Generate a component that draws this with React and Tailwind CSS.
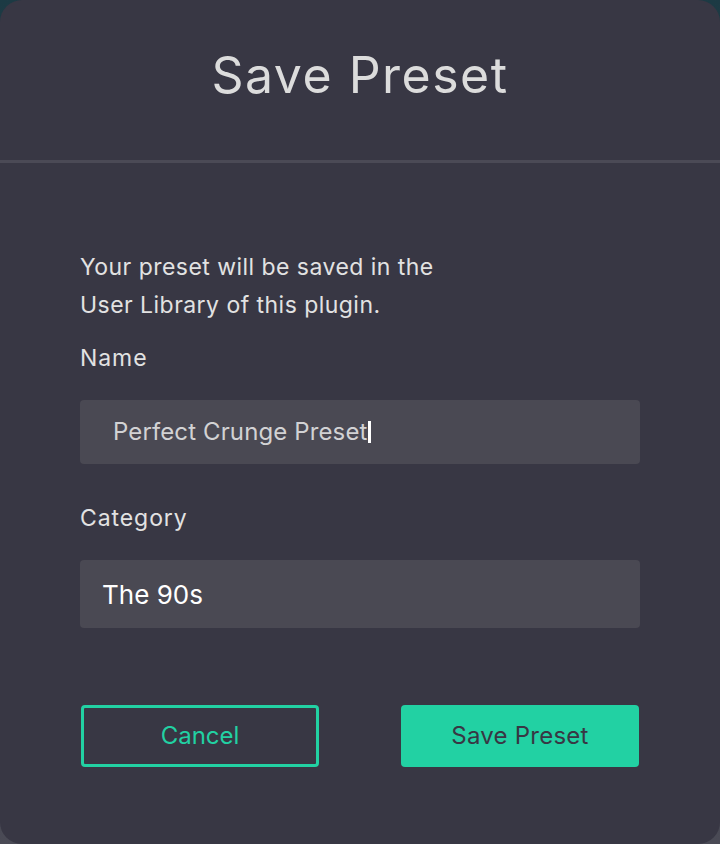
import React from 'react';

const font = { fontFamily: 'Inter, "Open Sans", sans-serif' };

export default function App() {
  return (
    <div className="w-[720px] h-[844px] bg-gradient-to-b from-[#1c3a44] to-[#4a4a55]" style={font}>
      <div className="w-full h-full bg-[#383744] rounded-[22px] flex flex-col">
        {/* Header */}
        <div className="h-[160px] flex items-center justify-center">
          <h1 className="text-[50px] text-[#dcdcdc] font-normal tracking-[0.03em] -mt-[10px]">Save Preset</h1>
        </div>
        <div className="h-[3px] bg-[#4b4a56]" />

        {/* Body */}
        <div className="px-[80px] pt-[85px] flex flex-col">
          <p className="text-[23px] leading-[38px] text-[#e2e2e2] tracking-[0.02em]">
            Your preset will be saved in the
            <br />
            User Library of this plugin.
          </p>
          <label className="mt-[19px] text-[23px] leading-[30px] text-[#e2e2e2] tracking-[0.04em]">Name</label>
          <div className="mt-[27px] h-[64px] bg-[#4a4953] rounded-[4px] flex items-center pl-[33px]">
            <span className="text-[24px] text-[#d2d2d4] tracking-[0.005em]">Perfect Crunge Preset</span>
            <span className="w-[3px] h-[22px] bg-white ml-[1px]" />
          </div>
          <label className="mt-[39px] text-[23px] leading-[30px] text-[#e2e2e2] tracking-[0.04em]">Category</label>
          <div className="mt-[27px] h-[68px] bg-[#4a4953] rounded-[4px] flex items-center pl-[22px]">
            <span className="text-[26px] text-white">The 90s</span>
          </div>

          {/* Actions */}
          <div className="mt-[77px] flex gap-[82px] pl-px">
            <button className="w-[238px] h-[62px] border-[3px] border-[#22d1a3] rounded-[4px] text-[24px] text-[#22d1a3]">
              Cancel
            </button>
            <button className="w-[238px] h-[62px] bg-[#22d1a3] rounded-[4px] text-[24px] text-[#383744] tracking-[0.01em]">
              Save Preset
            </button>
          </div>
        </div>
      </div>
    </div>
  );
}
